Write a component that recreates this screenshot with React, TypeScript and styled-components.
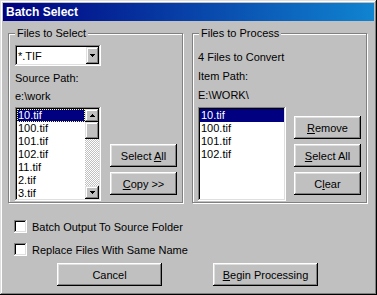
import styled, { createGlobalStyle } from 'styled-components';

const GlobalStyle = createGlobalStyle`
	html, body {
		margin: 0;
		padding: 0;
		background: #c0c0c0;
	}
	body {
		font-family: 'Liberation Sans', Arial, sans-serif;
		font-size: 11px;
		color: #000;
	}
`;

// win98 bevels
const raised = 'inset -1px -1px #000, inset 1px 1px #fff, inset -2px -2px #808080, inset 2px 2px #dfdfdf';
const raisedSmall = 'inset -1px -1px #000, inset 1px 1px #dfdfdf, inset -2px -2px #808080, inset 2px 2px #fff';
const sunken = 'inset -1px -1px #fff, inset 1px 1px #808080, inset -2px -2px #dfdfdf, inset 2px 2px #000';

const Window = styled.div`
	width: 377px;
	height: 295px;
	box-sizing: border-box;
	padding: 3px;
	background: #c0c0c0;
	box-shadow: inset -1px -1px #000, inset 1px 1px #dfdfdf, inset -2px -2px #808080, inset 2px 2px #fff;
	display: flex;
	flex-direction: column;
`;

const TitleBar = styled.div`
	height: 18px;
	flex-shrink: 0;
	display: flex;
	align-items: center;
	padding-left: 3px;
	background: linear-gradient(90deg, #000080, #1084d0);
	color: #fff;
	font-weight: bold;
	font-size: 12px;
`;

const Body = styled.div`
	padding: 12px 0 0 5px;
	display: flex;
	flex-direction: column;
`;

const GroupRow = styled.div`
	display: flex;
	gap: 9px;
`;

const Group = styled.div<{ $pt: number; $pl: number }>`
	position: relative;
	width: 175px;
	height: 170px;
	box-sizing: border-box;
	border: 1px solid #808080;
	box-shadow: inset 1px 1px #fff, 1px 1px #fff;
	padding: ${(p) => p.$pt}px 0 0 ${(p) => p.$pl}px;
`;

const Legend = styled.span`
	position: absolute;
	top: -7px;
	left: 6px;
	padding: 0 2px;
	line-height: 13px;
	background: #c0c0c0;
`;

const Split = styled.div<{ $gap: number }>`
	display: flex;
	align-items: flex-start;
	gap: ${(p) => p.$gap}px;
`;

const Column = styled.div<{ $w: number }>`
	width: ${(p) => p.$w}px;
	display: flex;
	flex-direction: column;
`;

const Combo = styled.div`
	height: 21px;
	box-sizing: border-box;
	padding: 2px;
	display: flex;
	align-items: stretch;
	background: #fff;
	box-shadow: ${sunken};
`;

const ComboText = styled.div`
	flex: 1;
	display: flex;
	align-items: center;
	padding-left: 1px;
`;

const ArrowButton = styled.div<{ $w: number; $h: number }>`
	width: ${(p) => p.$w}px;
	height: ${(p) => p.$h}px;
	flex-shrink: 0;
	display: flex;
	align-items: center;
	justify-content: center;
	background: #c0c0c0;
	box-shadow: ${raisedSmall};
`;

const Text = styled.div<{ $mt: number }>`
	line-height: 13px;
	margin-top: ${(p) => p.$mt}px;
	white-space: nowrap;
`;

const ListBox = styled.div<{ $w: number; $mt: number }>`
	width: ${(p) => p.$w}px;
	height: 94px;
	margin-top: ${(p) => p.$mt}px;
	box-sizing: border-box;
	padding: 2px;
	display: flex;
	background: #fff;
	box-shadow: ${sunken};
	overflow: hidden;
`;

const Items = styled.div`
	flex: 1;
	display: flex;
	flex-direction: column;
`;

const Item = styled.div<{ $selected?: boolean; $focused?: boolean }>`
	height: 13px;
	flex-shrink: 0;
	line-height: 13px;
	padding-left: 1px;
	background: ${(p) => (p.$selected ? '#000080' : 'transparent')};
	color: ${(p) => (p.$selected ? '#fff' : '#000')};
	outline: ${(p) => (p.$focused ? '1px dotted #ffff7f' : 'none')};
	outline-offset: -1px;
`;

const ScrollBar = styled.div`
	width: 14px;
	display: flex;
	flex-direction: column;
`;

const Thumb = styled.div`
	height: 17px;
	background: #c0c0c0;
	box-shadow: ${raisedSmall};
`;

const Track = styled.div`
	flex: 1;
	background: repeating-conic-gradient(#c0c0c0 0% 25%, #fff 0% 50%) 0 0 / 2px 2px;
`;

const ButtonStack = styled.div<{ $mt: number }>`
	margin-top: ${(p) => p.$mt}px;
	display: flex;
	flex-direction: column;
	gap: 5px;
`;

const Button = styled.button<{ $w: number }>`
	width: ${(p) => p.$w}px;
	height: 23px;
	padding: 0;
	border: none;
	background: #c0c0c0;
	box-shadow: ${raised};
	font: inherit;
	color: #000;
	white-space: nowrap;
`;

const Options = styled.div`
	margin-top: 17px;
	padding-left: 6px;
	display: flex;
	flex-direction: column;
	gap: 10px;
`;

const CheckRow = styled.label`
	display: flex;
	align-items: center;
	gap: 5px;
	height: 13px;
	white-space: nowrap;
`;

const CheckBox = styled.span`
	width: 13px;
	height: 13px;
	box-sizing: border-box;
	background: #fff;
	box-shadow: ${sunken};
`;

const Footer = styled.div`
	margin-top: 7px;
	padding-left: 49px;
	display: flex;
	gap: 51px;
`;

function Arrow({ up }: { up?: boolean }) {
	return (
		<svg width='5' height='3' viewBox='0 0 5 3' shapeRendering='crispEdges'>
			<path d={up ? 'M2 0h1v1h1v1h1v1H0V2h1V1h1z' : 'M0 0h5v1H4v1H3v1H2V2H1V1H0z'} fill='#000' />
		</svg>
	);
}

const sourceFiles = ['10.tif', '100.tif', '101.tif', '102.tif', '11.tif', '2.tif', '3.tif'];
const processFiles = ['10.tif', '100.tif', '101.tif', '102.tif'];

export default function App() {
	return (
		<>
			<GlobalStyle />
			<Window>
				<TitleBar>Batch Select</TitleBar>
				<Body>
					<GroupRow>
						<Group $pt={11} $pl={6}>
							<Legend>Files to Select</Legend>
							<Split $gap={9}>
								<Column $w={86}>
									<Combo>
										<ComboText>*.TIF</ComboText>
										<ArrowButton $w={13} $h={17}>
											<Arrow />
										</ArrowButton>
									</Combo>
									<Text $mt={6}>Source Path:</Text>
									<Text $mt={5}>e:\work</Text>
									<ListBox $w={86} $mt={4}>
										<Items>
											{sourceFiles.map((f, i) => (
												<Item key={f} $selected={i === 0} $focused={i === 0}>
													{f}
												</Item>
											))}
										</Items>
										<ScrollBar>
											<ArrowButton $w={14} $h={13}>
												<Arrow up />
											</ArrowButton>
											<Thumb />
											<Track />
											<ArrowButton $w={14} $h={13}>
												<Arrow />
											</ArrowButton>
										</ScrollBar>
									</ListBox>
								</Column>
								<ButtonStack $mt={99}>
									<Button $w={67}>
										Select <u>A</u>ll
									</Button>
									<Button $w={67}>
										<u>C</u>opy &gt;&gt;
									</Button>
								</ButtonStack>
							</Split>
						</Group>
						<Group $pt={17} $pl={5}>
							<Legend>Files to Process</Legend>
							<Text $mt={0}>4 Files to Convert</Text>
							<Text $mt={6}>Item Path:</Text>
							<Text $mt={6}>E:\WORK\</Text>
							<Split $gap={8}>
								<ListBox $w={88} $mt={5}>
									<Items>
										{processFiles.map((f, i) => (
											<Item key={f} $selected={i === 0}>
												{f}
											</Item>
										))}
									</Items>
								</ListBox>
								<ButtonStack $mt={14}>
									<Button $w={67}>
										<u>R</u>emove
									</Button>
									<Button $w={67}>
										<u>S</u>elect All
									</Button>
									<Button $w={67}>
										C<u>l</u>ear
									</Button>
								</ButtonStack>
							</Split>
						</Group>
					</GroupRow>
					<Options>
						<CheckRow>
							<CheckBox />
							Batch Output To Source Folder
						</CheckRow>
						<CheckRow>
							<CheckBox />
							Replace Files With Same Name
						</CheckRow>
					</Options>
					<Footer>
						<Button $w={105}>Cancel</Button>
						<Button $w={105}>
							<u>B</u>egin Processing
						</Button>
					</Footer>
				</Body>
			</Window>
		</>
	);
}
